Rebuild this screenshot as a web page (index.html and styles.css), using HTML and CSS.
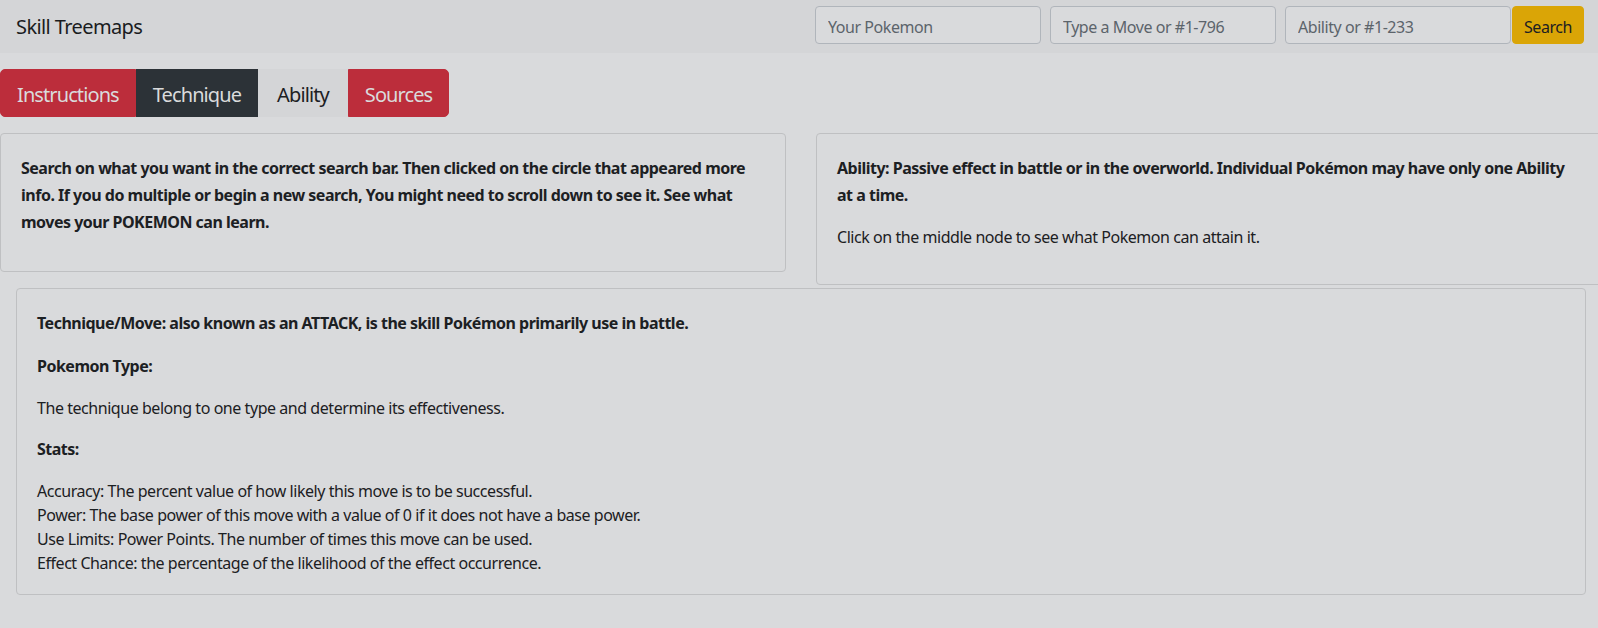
FILE: index.html
```html
<!DOCTYPE html>
<html lang="en">
<head>
<meta charset="utf-8">
<title>Skill Treemaps</title>
<link rel="stylesheet" href="styles.css">
</head>
<body>
<nav class="navbar">
  <a class="brand" href="#">Skill Treemaps</a>
  <form class="search-form">
    <input class="search-input" type="text" placeholder="Your Pokemon">
    <input class="search-input" type="text" placeholder="Type a Move or #1-796">
    <input class="search-input" type="text" placeholder="Ability or #1-233">
    <button class="search-btn" type="button">Search</button>
  </form>
</nav>

<main class="page">
  <div class="tabs">
    <button class="tab tab-red" type="button">Instructions</button>
    <button class="tab tab-dark" type="button">Technique</button>
    <button class="tab tab-light" type="button">Ability</button>
    <button class="tab tab-red" type="button">Sources</button>
  </div>

  <div class="card-row">
    <section class="card card-half">
      <p class="lead-bold">Search on what you want in the correct search bar. Then clicked on the circle that appeared more info. If you do multiple or begin a new search, You might need to scroll down to see it. See what moves your POKEMON can learn.</p>
    </section>
    <section class="card card-half">
      <p class="lead-bold">Ability: Passive effect in battle or in the overworld. Individual Pokémon may have only one Ability at a time.</p>
      <p class="plain">Click on the middle node to see what Pokemon can attain it.</p>
    </section>
  </div>

  <section class="card card-wide">
    <p class="lead-bold">Technique/Move: also known as an ATTACK, is the skill Pokémon primarily use in battle.</p>
    <p class="lead-bold">Pokemon Type:</p>
    <p class="plain">The technique belong to one type and determine its effectiveness.</p>
    <p class="lead-bold">Stats:</p>
    <p class="plain last">Accuracy: The percent value of how likely this move is to be successful.<br>
    Power: The base power of this move with a value of 0 if it does not have a base power.<br>
    Use Limits: Power Points. The number of times this move can be used.<br>
    Effect Chance: the percentage of the likelihood of the effect occurrence.</p>
  </section>
</main>
</body>
</html>
```
FILE: styles.css
```css
* { box-sizing: border-box; }

html, body {
  margin: 0;
  padding: 0;
}

body {
  background: #d9dadc;
  color: #1c2023;
  font-family: "Noto Sans", "Open Sans", sans-serif;
  font-size: 16px;
  line-height: 24px;
  letter-spacing: -0.5px;
  overflow-x: hidden;
  width: 1598px;
}

/* ---------- navbar ---------- */
.navbar {
  display: flex;
  justify-content: space-between;
  align-items: flex-start;
  height: 53px;
  padding: 6px 14px 9px 16px;
  background: #d4d5d7;
}

.brand {
  margin-top: 6px;
  font-size: 20px;
  line-height: 30px;
  letter-spacing: -0.6px;
  color: #1a1c1e;
  text-decoration: none;
}

.search-form {
  display: flex;
  margin: 0;
}

.search-input {
  width: 226px;
  height: 38px;
  padding: 8px 12px 4px;
  border: 1px solid #b0b5bb;
  border-radius: 4px;
  background: #d9dadc;
  color: #1c2023;
  font-family: inherit;
  font-size: 16px;
  line-height: 24px;
  letter-spacing: -0.45px;
}

.search-input + .search-input {
  margin-left: 9px;
}

.search-input::placeholder {
  color: #5c646b;
  opacity: 1;
}

.search-btn {
  margin-left: 1px;
  width: 72px;
  height: 38px;
  padding: 8px 0 4px;
  border: 1px solid #daa506;
  border-radius: 4px;
  background: #daa506;
  color: #1c2023;
  font-family: inherit;
  font-size: 16px;
  line-height: 24px;
  letter-spacing: -0.45px;
}

/* ---------- tabs ---------- */
.page {
  padding-top: 16px;
}

.tabs {
  display: inline-flex;
  vertical-align: top;
}

.tab {
  height: 48px;
  padding: 10px 16px 6px;
  border: 1px solid transparent;
  border-radius: 0;
  font-family: inherit;
  font-size: 20px;
  line-height: 30px;
  letter-spacing: -0.9px;
  color: #dadbdc;
}

.tab:first-child {
  border-top-left-radius: 5px;
  border-bottom-left-radius: 5px;
}

.tab:last-child {
  border-top-right-radius: 5px;
  border-bottom-right-radius: 5px;
}

.tab-red {
  background: #bc2d3b;
  border-color: #bc2d3b;
}

.tab-dark {
  background: #2c3237;
  border-color: #2c3237;
}

.tab-light {
  padding: 10px 18px 6px;
  background: #d4d5d7;
  border-color: #d4d5d7;
  color: #1c2023;
}

/* ---------- cards ---------- */
.card-row {
  display: flex;
  align-items: flex-start;
  gap: 30px;
  margin-top: 16px;
}

.card {
  border: 1px solid #bfc0c2;
  border-radius: 4px;
  padding: 21px 20px 19px;
  background: #d9dadc;
}

.card-half {
  flex: 0 0 786px;
  width: 786px;
}

.card-wide {
  margin: 3px 12px 0 16px;
}

.card p {
  margin: 0 0 16px;
}

.lead-bold {
  font-weight: 700;
  line-height: 27px;
}

.plain {
  line-height: 24px;
  letter-spacing: -0.45px;
}

.card p.last {
  margin-bottom: 0;
}
```
